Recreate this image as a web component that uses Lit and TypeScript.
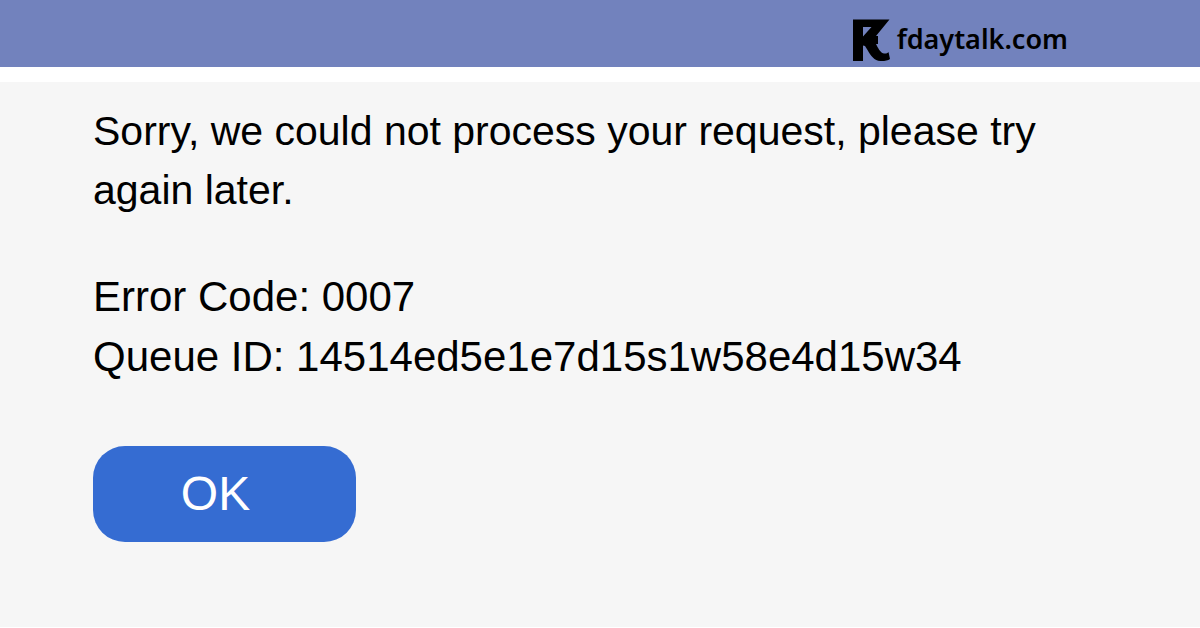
import { LitElement, html, css } from "lit";
import { customElement, property } from "lit/decorators.js";

@customElement("site-header")
class SiteHeader extends LitElement {
  static styles = css`
    :host {
      display: block;
      background: #7282bd;
      border-bottom: 15px solid #fff;
    }
    .bar {
      display: flex;
      justify-content: flex-end;
      padding: 19px 132px 5px 24px;
    }
    .brand {
      display: flex;
      align-items: flex-start;
      gap: 7px;
      color: #000;
      text-decoration: none;
      font: 600 27px/40px "Noto Sans", "Open Sans", sans-serif;
    }
    .mark {
      display: block;
      width: 37px;
      height: 43px;
    }
  `;

  render() {
    return html`
      <header class="bar">
        <a class="brand" href="#">
          <svg class="mark" viewBox="0 0 37 43" aria-hidden="true">
            <path
              fill-rule="evenodd"
              d="M0 .5H36.500L23 17H25V25H23C25 29 27 33 30 34.300C33 35 35 34 35.500 33L37 40C35 41.500 31 42.200 27.500 42C21 41.500 18 37 14.500 31L12 27L10 26.500V42H0ZM10 8V17.500L18.500 8Z"
            />
          </svg>
          <span>fdaytalk.com</span>
        </a>
      </header>
    `;
  }
}

@customElement("error-panel")
class ErrorPanel extends LitElement {
  @property() code = "";
  @property() queue = "";

  static styles = css`
    :host {
      display: block;
      padding: 20px 93px 24px;
      color: #000;
      font: 42px/60px "Liberation Sans", Arial, sans-serif;
    }
    .message {
      margin: 0 0 47px;
      font-size: 41px;
      line-height: 59px;
    }
    .details {
      margin: 0 0 59px;
    }
    .line {
      display: block;
    }
    .ok {
      display: block;
      width: 263px;
      padding: 20px 18px 20px 0;
      border: 0;
      border-radius: 32px;
      background: #356cd2;
      color: #fff;
      font: 48px/56px "Liberation Sans", Arial, sans-serif;
      cursor: pointer;
    }
  `;

  render() {
    return html`
      <p class="message">
        Sorry, we could not process your request, please try again later.
      </p>
      <p class="details">
        <span class="line">Error Code: ${this.code}</span>
        <span class="line">Queue ID: ${this.queue}</span>
      </p>
      <button class="ok" type="button">OK</button>
    `;
  }
}

@customElement("app-root")
class AppRoot extends LitElement {
  static styles = css`
    :host {
      display: flex;
      flex-direction: column;
      box-sizing: border-box;
      min-height: 100vh;
      border-bottom: 1px solid #fff;
      background: #f6f6f6;
    }
  `;

  render() {
    return html`
      <site-header></site-header>
      <main>
        <error-panel code="0007" queue="14514ed5e1e7d15s1w58e4d15w34"></error-panel>
      </main>
    `;
  }
}
